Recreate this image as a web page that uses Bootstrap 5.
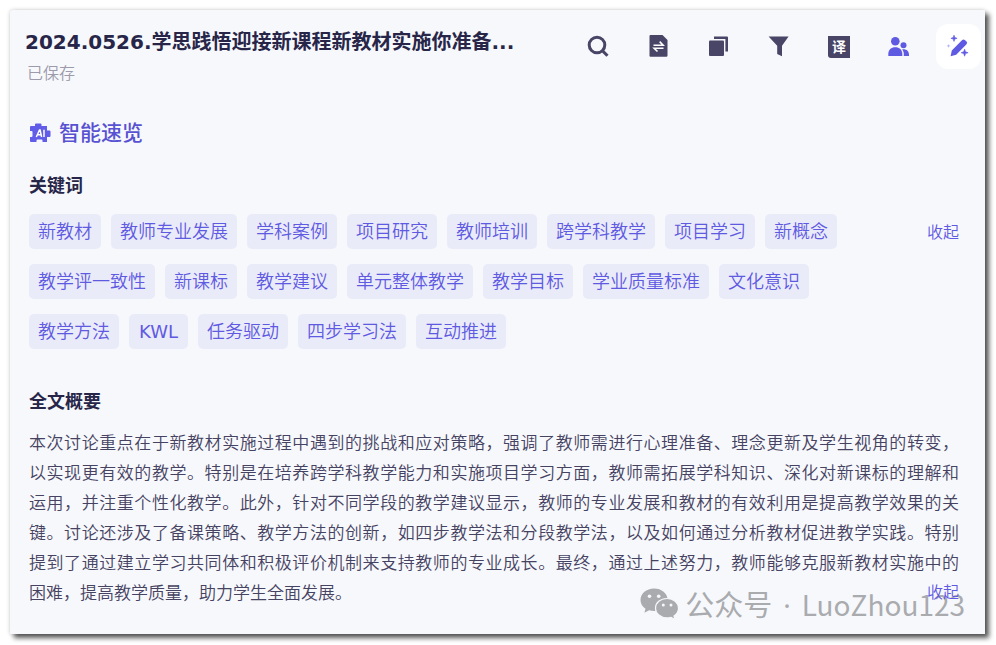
<!DOCTYPE html>
<html lang="zh-CN">
<head>
<meta charset="utf-8">
<meta name="viewport" content="width=device-width, initial-scale=1">
<title>智能速览</title>
<link rel="stylesheet" href="https://cdn.jsdelivr.net/npm/bootstrap@5.3.0/dist/css/bootstrap.min.css">
<style>
  :root { --ink: #272649; --icon: #484566; --accent: #5f5ae2; }
  body {
    background: #fff;
    color: #464362;
    font-family: "DejaVu Sans", "Noto Sans CJK SC", sans-serif;
    padding: 10px 11px 11px 10px;
  }
  .panel {
    background: #f7f8fc;
    border-radius: 3px 0 0 0;
    box-shadow: 4px 4px 5px rgba(0, 0, 0, .65), 0 0 4px rgba(0, 0, 0, .2);
    padding: 14px 4px 26px 15px;
  }
  .doc-title { color: var(--ink); font-size: 20px; line-height: 30px; font-weight: 700; }
  .doc-head { padding-top: 3px; }
  .doc-state { color: #9c9aab; font-size: 16px; line-height: 24px; font-weight: 350; margin-top: 5px; padding-left: 2px; }
  .tools { gap: 15px; }
  .tool { width: 45px; height: 45px; border-radius: 12px; color: var(--icon); }
  .tool.on { background: #fff; }
  .tool.violet { color: var(--accent); }
  .content { padding: 32px 22px 0 4px; }
  .brand { color: #5852d2; font-size: 21px; line-height: 30px; font-weight: 500; gap: 8px; }
  .sub-title { color: var(--ink); font-size: 18px; line-height: 30px; font-weight: 700; }
  .keys-title { margin-top: 23px; }
  .keys { margin-top: 13px; gap: 24px; }
  .tag-list { gap: 15px 10px; }
  .tag { background: #eaebf9; color: var(--accent); font-size: 18px; line-height: 34px; font-weight: 350; padding: 1px 9px 0; border-radius: 5px; }
  .tag-latin { font-weight: 400; padding: 1px 10px 0; }
  .fold { color: var(--accent); font-size: 16px; line-height: 30px; font-weight: 350; }
  .keys .fold { margin-top: 4px; }
  .sum-title { margin-top: 38px; }
  .summary { margin-top: 11px; font-size: 17px; line-height: 30px; font-weight: 350; text-align: justify; text-align-last: justify; }
  .summary-end { font-size: 17px; line-height: 30px; font-weight: 350; }
  .watermark {
    right: 20px; bottom: 8px; gap: 6px; color: #a9abae; pointer-events: none;
    font-family: "Noto Sans CJK SC", sans-serif; font-size: 28px; line-height: 42px;
  }
  .wm-text { gap: 11px; }
  .wm-kind { font-size: 29px; }
  .wm-dot { font-family: "Noto Sans", sans-serif; }
  .summary-end .fold { position: relative; z-index: 2; }
</style>
</head>
<body>
<main class="panel position-relative">
  <header class="d-flex align-items-start justify-content-between">
    <div class="doc-head">
      <h1 class="doc-title mb-0">2024.0526.学思践悟迎接新课程新教材实施你准备...</h1>
      <div class="doc-state">已保存</div>
    </div>
    <div class="tools d-flex" role="toolbar" aria-label="工具">
      <button type="button" class="tool btn border-0 p-0 d-flex align-items-center justify-content-center" aria-label="搜索">
        <svg width="25" height="25" fill="none" stroke="currentColor" stroke-width="3"><circle cx="11" cy="11" r="7.8"/><path d="M16.3 16.6l5.2 5.2"/></svg>
      </button>
      <button type="button" class="tool btn border-0 p-0 d-flex align-items-center justify-content-center" aria-label="替换">
        <svg width="25" height="25"><path fill="currentColor" d="M4.500 1H16.500l5 5v15.500a1.200 1.200 0 0 1-1.200 1.200H4.500a1 1 0 0 1-1-1V2a1 1 0 0 1 1-1z"/><path fill="none" stroke="#fff" stroke-width="1.600" d="M7.500 11.200h9.600l-3.400-3.600M17.500 14.200H8.100l3.400 3.300"/></svg>
      </button>
      <button type="button" class="tool btn border-0 p-0 d-flex align-items-center justify-content-center" aria-label="复制">
        <svg width="25" height="25" fill="currentColor"><path d="M8 2.500h13a1 1 0 0 1 1 1v14h-2.600V5.100H8z"/><rect x="3" y="6.600" width="15" height="15.400" rx="1"/></svg>
      </button>
      <button type="button" class="tool btn border-0 p-0 d-flex align-items-center justify-content-center" aria-label="筛选">
        <svg width="25" height="25" fill="currentColor"><path d="M2.600 2.400h20L16 11.800v10.400l-4.800-2.300v-8.100z"/></svg>
      </button>
      <button type="button" class="tool btn border-0 p-0 d-flex align-items-center justify-content-center" aria-label="翻译">
        <svg width="25" height="25"><path fill="currentColor" d="M2 2h22v22H5a3 3 0 0 1-3-3z"/><text x="13" y="18" text-anchor="middle" fill="#fff" font-size="14" font-weight="700">译</text></svg>
      </button>
      <button type="button" class="tool violet btn border-0 p-0 d-flex align-items-center justify-content-center" aria-label="发言人">
        <svg width="25" height="25" fill="currentColor"><circle cx="9.300" cy="7.300" r="4.300"/><path d="M2.300 22v-2c0-4 2.900-6.700 7-6.700s7 2.700 7 6.700v2z"/><circle cx="17.500" cy="11.200" r="3"/><path d="M17.800 22v-2.200c0-1.700-.7-3.300-1.800-4.300 4-.8 7 1.500 7 5.300V22z"/></svg>
      </button>
      <button type="button" class="tool violet on btn border-0 p-0 d-flex align-items-center justify-content-center" aria-label="智能速览" aria-pressed="true">
        <svg width="25" height="25" fill="currentColor"><path d="M4.600 22.200l1.200-5.600L16.200 6q1.300-1.200 2.600 0l1.700 1.600q1.300 1.300 0 2.600L10.200 20.800z"/><path d="M8 1.200l.8 2.300 2.300.8-2.300.8L8 7.400l-.8-2.300-2.300-.8 2.300-.8zM18.600 15.200l.9 2.600 2.600.9-2.600.9-.9 2.600-.9-2.600-2.600-.9 2.600-.9z" stroke="currentColor" stroke-width=".6"/><path opacity=".45" d="M2.500 10l.6 1.300 1.300.6-1.300.6-.6 1.300-.6-1.300-1.300-.6 1.300-.6z"/></svg>
      </button>
    </div>
  </header>

  <div class="content">
    <div class="brand d-flex align-items-center">
      <svg width="22" height="22" aria-hidden="true"><path fill="#625de8" d="M2 4h4V2.500a1 1 0 0 1 1-1h4.500a1 1 0 0 1 1 1V4H18v4.500h2.500a1 1 0 0 1 1 1v4.500a1 1 0 0 1-1 1H18v5h-4.500v-1.500a1 1 0 0 0-1-1h-4a1 1 0 0 0-1 1V20H2a1 1 0 0 1-1-1v-4h1.500a1 1 0 0 0 1-1v-4a1 1 0 0 0-1-1H1V5a1 1 0 0 1 1-1z"/><path fill="none" stroke="#fff" stroke-width="1.500" d="M7.300 15l3.200-7h.6l1.500 7M8.300 12.800h3.800M15 7.800V15"/></svg>
      <span>智能速览</span>
    </div>

    <h2 class="sub-title keys-title mb-0">关键词</h2>
    <div class="keys d-flex align-items-start">
      <div class="tag-list d-flex flex-wrap flex-grow-1">
        <span class="tag">新教材</span><span class="tag">教师专业发展</span><span class="tag">学科案例</span><span class="tag">项目研究</span><span class="tag">教师培训</span><span class="tag">跨学科教学</span><span class="tag">项目学习</span><span class="tag">新概念</span>
        <span class="tag">教学评一致性</span><span class="tag">新课标</span><span class="tag">教学建议</span><span class="tag">单元整体教学</span><span class="tag">教学目标</span><span class="tag">学业质量标准</span><span class="tag">文化意识</span>
        <span class="tag">教学方法</span><span class="tag tag-latin">KWL</span><span class="tag">任务驱动</span><span class="tag">四步学习法</span><span class="tag">互动推进</span>
      </div>
      <button type="button" class="fold btn border-0 p-0 flex-shrink-0">收起</button>
    </div>

    <h2 class="sub-title sum-title mb-0">全文概要</h2>
    <p class="summary mb-0">本次讨论重点在于新教材实施过程中遇到的挑战和应对策略，强调了教师需进行心理准备、理念更新及学生视角的转变，<br>以实现更有效的教学。特别是在培养跨学科教学能力和实施项目学习方面，教师需拓展学科知识、深化对新课标的理解和<br>运用，并注重个性化教学。此外，针对不同学段的教学建议显示，教师的专业发展和教材的有效利用是提高教学效果的关<br>键。讨论还涉及了备课策略、教学方法的创新，如四步教学法和分段教学法，以及如何通过分析教材促进教学实践。特别<br>提到了通过建立学习共同体和积极评价机制来支持教师的专业成长。最终，通过上述努力，教师能够克服新教材实施中的</p>
    <div class="summary-end d-flex justify-content-between">
      <span>困难，提高教学质量，助力学生全面发展。</span>
      <button type="button" class="fold btn border-0 p-0">收起</button>
    </div>
  </div>

  <div class="watermark position-absolute d-flex align-items-center">
    <svg width="39" height="32" aria-hidden="true"><path fill="#a9abae" d="M14 .5C6.400.5.500 5.500.500 12c0 3.600 1.900 6.700 5 8.800L4.400 24.700l4.700-2.400c1.700.5 3.400.7 5 .7 7.500 0 13.500-5 13.500-11.300S21.600.5 14 .5z"/><path fill="#a9abae" stroke="#f7f8fc" stroke-width="1.200" d="M27 10.500c-6.600 0-11.500 4.300-11.500 9.700s5 9.700 11.500 9.700c1.400 0 2.800-.2 4-.6l4 2.200-1-3.500c2.700-1.800 4.500-4.600 4.500-7.800 0-5.400-5-9.700-11.500-9.700z"/><g fill="#f7f8fc"><circle cx="9.500" cy="8.300" r="1.800"/><circle cx="18.700" cy="8.300" r="1.800"/><circle cx="23.300" cy="17" r="1.500"/><circle cx="31" cy="17" r="1.500"/></g></svg>
    <div class="wm-text d-flex align-items-baseline"><span class="wm-kind">公众号</span><span class="wm-dot">·</span><span>LuoZhou123</span></div>
  </div>
</main>
<script src="https://cdn.jsdelivr.net/npm/bootstrap@5.3.0/dist/js/bootstrap.bundle.min.js"></script>
</body>
</html>
